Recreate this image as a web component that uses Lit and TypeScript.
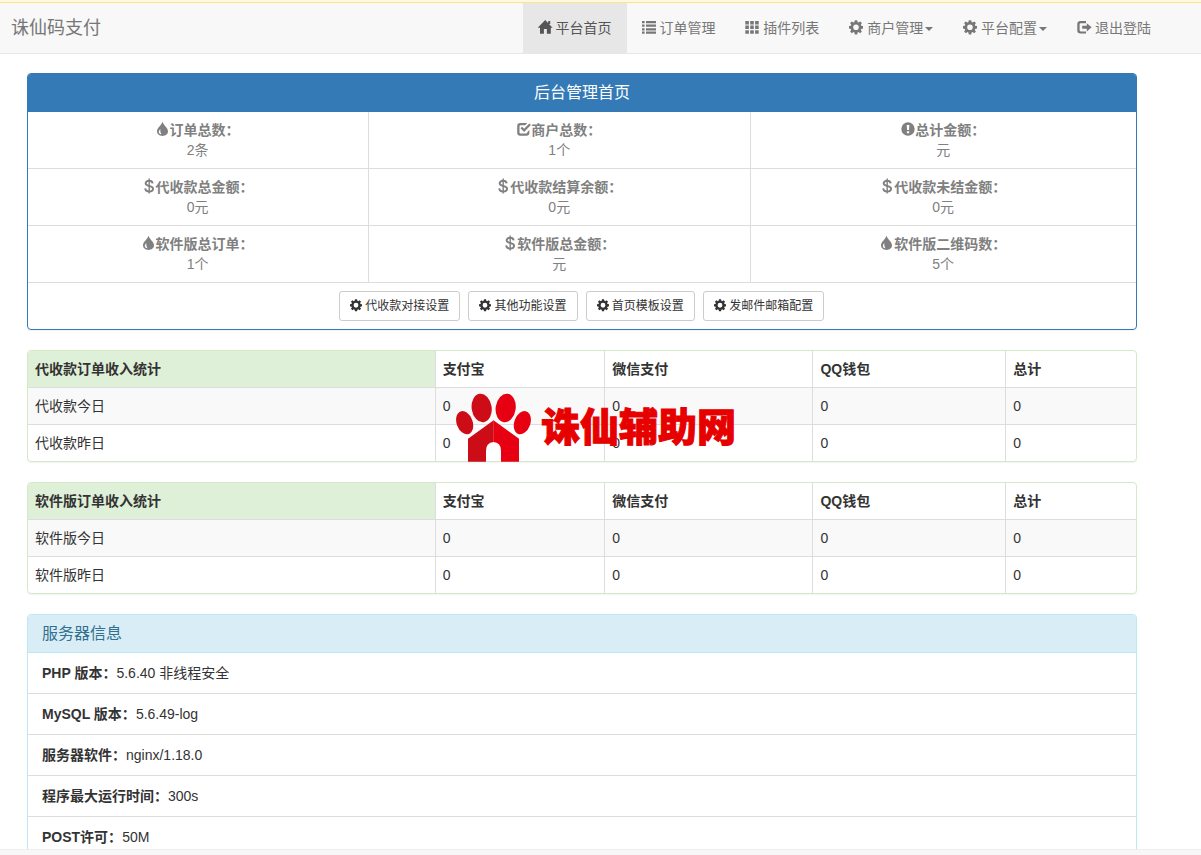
import { LitElement, html, css, svg } from "lit";
import { customElement, property } from "lit/decorators.js";

const shapes: Record<string, unknown> = {
  home: svg`<path d="M7.200 0 L14.600 7.800 H12.800 V13.800 H8.900 V9 H5.900 V13.800 H2 V7.800 H-.3 Z M10.200 1 H12.200 V4 H10.200 Z"/>`,
  list: svg`<path d="M0 1h2.6v2.2H0zM4 1h10v2.2H4zM0 4.6h2.6v2.2H0zM4 4.6h10v2.2H4zM0 8.2h2.6v2.2H0zM4 8.2h10v2.2H4zM0 11.6h2.6v2.2H0zM4 11.6h10v2.2H4z"/>`,
  th: svg`<path d="M.3 1h3.6v3.4H.3zM5.2 1h3.6v3.4H5.2zM10.1 1h3.6v3.4h-3.6zM.3 5.6h3.6V9H.3zM5.2 5.6h3.6V9H5.2zM10.1 5.6h3.6V9h-3.6zM.3 10.2h3.6v3.6H.3zM5.2 10.2h3.6v3.6H5.2zM10.1 10.2h3.6v3.6h-3.6z"/>`,
  cog: svg`<path fill-rule="evenodd" d="M5.800 .2h2.400l.4 1.900 1 .4 1.600-1.100 1.700 1.700-1.100 1.600.4 1 1.800.4v2.400l-1.800.4-.4 1 1.100 1.600-1.700 1.700-1.600-1.100-1 .4-.4 1.900H5.800l-.4-1.900-1-.4-1.600 1.100-1.700-1.700 1.100-1.600-.4-1L0 8.500V6.100l1.800-.4.4-1L1.100 3.100 2.800 1.400l1.600 1.100 1-.4zM7 4.500a2.800 2.800 0 1 0 0 5.600a2.800 2.800 0 1 0 0-5.600z"/>`,
  logout: svg`<path d="M9 1H3.400Q.3 1 .3 4V10.600Q.3 13.600 3.400 13.600H9V11.400H3.800Q2.600 11.400 2.600 10.300V4.300Q2.600 3.200 3.800 3.200H9Z M9.800 3.200L14.600 7.300 9.800 11.400V8.800H5.200V5.800H9.800Z"/>`,
  tint: svg`<path fill-rule="evenodd" d="M6.500 -.4C7.100 3.400 12 5.700 12 9.300C12 12 9.600 14 6.500 14S1 12 1 9.300C1 5.700 5.900 3.400 6.500 -.4ZM4.200 7C2.900 8.600 2.400 9.900 3.200 11.200Q4 12.200 5.400 12.200Q4.100 10.500 4.200 7Z"/>`,
  check: svg`<path d="M10.300 1H3.200Q.2 1 .2 4V10.800Q.2 13.800 3.200 13.800H9.400Q12.400 13.800 12.400 10.800V8L10.200 10.200V10.600Q10.200 11.600 9.200 11.600H3.500Q2.500 11.600 2.500 10.600V4.200Q2.500 3.200 3.500 3.200H8.200Z M3.500 6.300L5.100 4.700 7.100 6.700 12.300 1.500 13.900 3.100 7.100 9.900Z"/>`,
  alert: svg`<path fill-rule="evenodd" d="M7 .3a6.700 6.700 0 1 0 0 13.400a6.700 6.700 0 1 0 0-13.400zM5.700 3H8.400L8 8H6.100ZM5.900 9.200H8.200V11.300H5.900Z"/>`,
  usd: svg`<path fill="none" stroke="currentColor" stroke-width="1.900" d="M10.700 4.400C10.400 2.600 9 1.700 7.100 1.700C5 1.700 3.600 2.700 3.600 4.300C3.600 8 11.100 6 11.100 9.800C11.100 11.500 9.500 12.500 7.200 12.500C4.900 12.500 3.400 11.500 3.200 9.400"/><path fill="none" stroke="currentColor" stroke-width="1.400" d="M7.200 -.6V14.600"/>`,
};

@customElement("glyph-icon")
class GlyphIcon extends LitElement {
  @property() name = "cog";
  static styles = css`
    :host {
      display: inline-block;
      width: 1em;
      height: 1em;
      line-height: 1;
      vertical-align: -1px;
    }
    .glyph {
      display: block;
      width: 100%;
      height: 100%;
      overflow: visible;
      fill: currentColor;
    }
  `;
  render() {
    return html`<svg class="glyph" viewBox="0 0 14 14" aria-hidden="true">${shapes[this.name]}</svg>`;
  }
}

const navItems = [
  { icon: "home", label: "平台首页", active: true, menu: false },
  { icon: "list", label: "订单管理", active: false, menu: false },
  { icon: "th", label: "插件列表", active: false, menu: false },
  { icon: "cog", label: "商户管理", active: false, menu: true },
  { icon: "cog", label: "平台配置", active: false, menu: true },
  { icon: "logout", label: "退出登陆", active: false, menu: false },
];

const summary = [
  [["tint", "订单总数：", "2条"], ["check", "商户总数：", "1个"], ["alert", "总计金额：", "元"]],
  [["usd", "代收款总金额：", "0元"], ["usd", "代收款结算余额：", "0元"], ["usd", "代收款未结金额：", "0元"]],
  [["tint", "软件版总订单：", "1个"], ["usd", "软件版总金额：", "元"], ["tint", "软件版二维码数：", "5个"]],
];

const actions = ["代收款对接设置", "其他功能设置", "首页模板设置", "发邮件邮箱配置"];
const channels = ["支付宝", "微信支付", "QQ钱包", "总计"];

const server = [
  ["PHP 版本：", "5.6.40 非线程安全"],
  ["MySQL 版本：", "5.6.49-log"],
  ["服务器软件：", "nginx/1.18.0"],
  ["程序最大运行时间：", "300s"],
  ["POST许可：", "50M"],
];

@customElement("app-root")
class AppRoot extends LitElement {
  static styles = css`
    :host {
      display: flex;
      flex-direction: column;
      height: 100vh;
      overflow: hidden;
      background: #fff;
      color: #333;
      font: 14px/20px "Liberation Sans", "Noto Sans CJK SC", sans-serif;
    }
    * {
      box-sizing: border-box;
    }
    a {
      color: inherit;
      text-decoration: none;
    }
    .notice {
      flex: none;
      height: 3px;
      background: #fffae1;
      border-bottom: 1px solid #ffe18f;
    }
    .navbar {
      flex: none;
      display: flex;
      justify-content: space-between;
      padding: 0 35px 0 11px;
      background: #f8f8f8;
      border-bottom: 1px solid #e7e7e7;
      color: #777;
    }
    .brand {
      padding: 15px 0;
      font-size: 18px;
    }
    .menu {
      display: flex;
      margin: 0;
      padding: 0;
      list-style: none;
    }
    .link {
      display: block;
      padding: 15px;
      white-space: nowrap;
    }
    .active {
      background: #e7e7e7;
      color: #555;
    }
    .caret {
      display: inline-block;
      margin-left: 2px;
      vertical-align: middle;
      border-top: 4px solid;
      border-left: 4px solid transparent;
      border-right: 4px solid transparent;
    }
    .content {
      flex: 1;
      min-height: 0;
      overflow: hidden;
      padding: 19px 64px 0 27px;
    }
    .panel {
      position: relative;
      margin-bottom: 20px;
      border: 1px solid #ddd;
      border-radius: 4px;
      box-shadow: 0 1px 1px rgba(0, 0, 0, 0.05);
    }
    .primary {
      border-color: #337ab7;
    }
    .success {
      border-color: #d6e9c6;
    }
    .info {
      border-color: #bce8f1;
    }
    .heading {
      margin: 0;
      padding: 10px 14px;
      border-bottom: 1px solid;
      border-radius: 3px 3px 0 0;
      font-size: 16px;
      font-weight: 400;
      line-height: 17px;
    }
    .primary .heading {
      background: #337ab7;
      border-color: #337ab7;
      color: #fff;
      text-align: center;
    }
    .info .heading {
      background: #d9edf7;
      border-color: #bce8f1;
      color: #31708f;
    }
    .grid {
      width: 100%;
      table-layout: fixed;
      border-collapse: separate;
      border-spacing: 0;
    }
    .grid th,
    .grid td {
      padding: 8px 8px 8px 7px;
      text-align: left;
      border-bottom: 1px solid #ddd;
    }
    .grid th + th,
    .grid td + td {
      border-left: 1px solid #ddd;
    }
    .grid tr.last > * {
      border-bottom: 0;
    }
    .grid.summary td {
      text-align: center;
      color: #808080;
    }
    .w31 { width: 30.7%; }
    .w34 { width: 34.5%; }
    .w37 { width: 36.7%; }
    .w15 { width: 15.3%; }
    .w19 { width: 18.8%; }
    .w17 { width: 17.4%; }
    .striped {
      background: #f9f9f9;
    }
    .grid .lead {
      background: #dff0d8;
      border-top-left-radius: 3px;
    }
    .actions {
      display: flex;
      justify-content: center;
      gap: 8px;
    }
    .button {
      padding: 5px 10px;
      border: 1px solid #ccc;
      border-radius: 3px;
      color: #333;
      font-size: 12px;
      line-height: 18px;
    }
    .facts {
      margin: 0;
      padding: 0;
      list-style: none;
    }
    .fact {
      padding: 10px 14px;
      border-bottom: 1px solid #ddd;
    }
    .watermark {
      position: absolute;
      left: 427px;
      top: 42px;
      display: flex;
      align-items: center;
      gap: 9px;
      color: #e60000;
      pointer-events: none;
    }
    .paw {
      width: 77px;
      height: 69px;
    }
    .site {
      font-size: 39px;
      line-height: 69px;
      font-weight: 900;
      white-space: nowrap;
      -webkit-text-stroke: 1px #e60000;
    }
    .footer {
      flex: none;
      height: 6px;
      background: #f8f8f8;
      border-top: 1px solid #eee;
    }
  `;

  private watermark() {
    return html`<div class="watermark">
      <svg class="paw" viewBox="75 159 231 207" aria-hidden="true">
        <g fill="#cc0d18">
          <ellipse cx="104" cy="248" rx="24" ry="36" transform="rotate(-20 104 248)" />
          <ellipse cx="155" cy="204" rx="30" ry="43" transform="rotate(-8 155 204)" />
          <path d="M191 241V306Q168 308 168 332V365H114V296Z" />
        </g>
        <g fill="#e60012">
          <ellipse cx="227" cy="204" rx="30" ry="43" transform="rotate(8 227 204)" />
          <ellipse cx="277" cy="248" rx="24" ry="36" transform="rotate(20 277 248)" />
          <path d="M190.500 241L267 296V365H213V332Q213 308 190.500 306Z" />
        </g>
      </svg>
      <span class="site">诛仙辅助网</span>
    </div>`;
  }

  private income(title: string, rows: string[], marked: boolean) {
    return html`<section class="panel success">
      <table class="grid">
        <colgroup>
          <col class="w37" /><col class="w15" /><col class="w19" /><col class="w17" /><col />
        </colgroup>
        <thead>
          <tr>
            <th class="lead" scope="col">${title}</th>
            ${channels.map((c) => html`<th scope="col">${c}</th>`)}
          </tr>
        </thead>
        <tbody>
          ${rows.map(
            (r, i) => html`<tr class=${i === 0 ? "striped" : "last"}>
              <td>${r}</td>
              ${channels.map(() => html`<td>0</td>`)}
            </tr>`
          )}
        </tbody>
      </table>
      ${marked ? this.watermark() : ""}
    </section>`;
  }

  render() {
    return html`
      <div class="notice"></div>
      <nav class="navbar">
        <a class="brand" href="#">诛仙码支付</a>
        <ul class="menu">
          ${navItems.map(
            (n) => html`<li>
              <a class="link ${n.active ? "active" : ""}" href="#"
                ><glyph-icon name=${n.icon}></glyph-icon> ${n.label}${n.menu
                  ? html`<span class="caret"></span>`
                  : ""}</a
              >
            </li>`
          )}
        </ul>
      </nav>
      <main class="content">
        <section class="panel primary">
          <h3 class="heading">后台管理首页</h3>
          <table class="grid summary">
            <colgroup>
              <col class="w31" /><col class="w34" /><col />
            </colgroup>
            <tbody>
              ${summary.map(
                (row) => html`<tr>
                  ${row.map(
                    ([icon, label, value]) =>
                      html`<td><b><glyph-icon name=${icon}></glyph-icon>${label}</b><br />${value}</td>`
                  )}
                </tr>`
              )}
              <tr class="last">
                <td colspan="3">
                  <div class="actions">
                    ${actions.map(
                      (a) => html`<a class="button" href="#"><glyph-icon name="cog"></glyph-icon> ${a}</a>`
                    )}
                  </div>
                </td>
              </tr>
            </tbody>
          </table>
        </section>
        ${this.income("代收款订单收入统计", ["代收款今日", "代收款昨日"], true)}
        ${this.income("软件版订单收入统计", ["软件版今日", "软件版昨日"], false)}
        <section class="panel info">
          <h3 class="heading">服务器信息</h3>
          <ul class="facts">
            ${server.map(([k, v]) => html`<li class="fact"><b>${k}</b>${v}</li>`)}
          </ul>
        </section>
      </main>
      <footer class="footer"></footer>
    `;
  }
}
